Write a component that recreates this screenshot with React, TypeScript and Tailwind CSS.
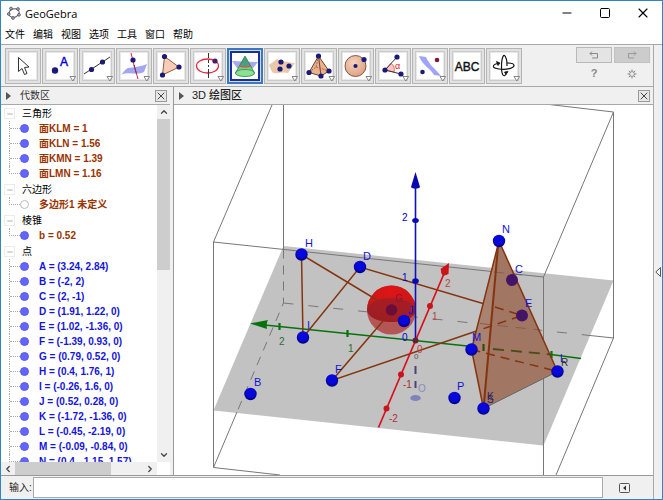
import type { ReactNode } from "react";
import {
  ChevronDown,
  ChevronLeft,
  ChevronRight,
  ChevronUp,
  Minus,
  Square,
  X,
} from "lucide-react";

const menus = ["文件", "编辑", "视图", "选项", "工具", "窗口", "帮助"];

const groups = [
  {
    name: "三角形",
    color: "text-[#993300]",
    items: ["面KLM = 1", "面KLN = 1.56", "面KMN = 1.39", "面LMN = 1.16"],
  },
  { name: "六边形", color: "text-[#993300]", hidden: true, items: ["多边形1 未定义"] },
  { name: "棱锥", color: "text-[#993300]", items: ["b = 0.52"] },
  {
    name: "点",
    color: "text-[#1414dc]",
    items: [
      "A = (3.24, 2.84)",
      "B = (-2, 2)",
      "C = (2, -1)",
      "D = (1.91, 1.22, 0)",
      "E = (1.02, -1.36, 0)",
      "F = (-1.39, 0.93, 0)",
      "G = (0.79, 0.52, 0)",
      "H = (0.4, 1.76, 1)",
      "I = (-0.26, 1.6, 0)",
      "J = (0.52, 0.28, 0)",
      "K = (-1.72, -1.36, 0)",
      "L = (-0.45, -2.19, 0)",
      "M = (-0.09, -0.84, 0)",
      "N = (0.4, -1.15, 1.57)",
    ],
  },
];

function Dot({ x, y, r = 2.6, fill = "#1a1a78" }: { x: number; y: number; r?: number; fill?: string }) {
  return <circle cx={x} cy={y} r={r} fill={fill} />;
}

const tools: { label: string; menu?: boolean; selected?: boolean; icon: ReactNode }[] = [
  {
    label: "移动",
    icon: (
      <path
        d="M13.5 9.5V23.5L17 20.5L19.5 26.5L22 25.5L19.5 19.5L24 19Z"
        fill="#fff"
        stroke="#333"
      />
    ),
  },
  {
    label: "点",
    menu: true,
    icon: (
      <>
        <Dot x={13} y={22.5} r={3.2} />
        <text x="18" y="17.5" fontSize="12" fill="#0000e0" stroke="#0000e0" strokeWidth="0.4">
          A
        </text>
      </>
    ),
  },
  {
    label: "直线",
    menu: true,
    icon: (
      <>
        <path d="M5 26L31 9" stroke="#333" />
        <Dot x={12.5} y={21.5} />
        <Dot x={23.5} y={14} />
      </>
    ),
  },
  {
    label: "垂线",
    menu: true,
    icon: (
      <>
        <path d="M5 27C7 25 9 21 12 20C18 19 24 19 31 16L28 24C21 28 13 23 5 27Z" fill="#a3a7f2" />
        <path d="M15 5L18 17L22 31" stroke="#e8203c" fill="none" />
        <path d="M18 17L20.5 26" stroke="#4a3060" strokeDasharray="2 1" />
        <Dot x={17} y={12} />
      </>
    ),
  },
  {
    label: "多边形",
    icon: (
      <>
        <path d="M11.5 8.5L26 19L9.5 27Z" fill="#f5cdb8" stroke="#9a5a3c" />
        <Dot x={11.5} y={8.5} />
        <Dot x={26} y={19} />
        <Dot x={9.5} y={27} />
      </>
    ),
  },
  {
    label: "圆",
    menu: true,
    icon: (
      <>
        <ellipse cx="17.5" cy="18" rx="11" ry="7" fill="none" stroke="#e42a40" strokeWidth="1.3" />
        <path d="M18.5 5V10M18.5 12V30" stroke="#333" />
        <path d="M18.5 15V17M18.5 19V21" stroke="#fff" />
        <Dot x={25} y={13} fill="#4a1a68" />
      </>
    ),
  },
  {
    label: "相交曲线",
    selected: true,
    icon: (
      <>
        <path d="M5 13L31 14L26 20L10 20Z" fill="#a4a9f0" />
        <path d="M18 8L28 25C28 30 8 30 8 25Z" fill="#69c878" fillOpacity="0.9" />
        <path d="M18 8L23 16.5C21 18.5 15 18.5 13 16.5Z" fill="#4d9d85" />
        <ellipse cx="18" cy="25" rx="9.5" ry="3.5" fill="#8ddf95" stroke="#268b39" strokeWidth="0.7" />
        <path d="M18 8L8.5 25M18 8L27.5 25" stroke="#278244" strokeWidth="0.7" />
        <path d="M12.5 17C14 19.5 22 19.5 23.5 17" stroke="#e33b4e" fill="none" strokeWidth="1.3" />
      </>
    ),
  },
  {
    label: "平面",
    menu: true,
    icon: (
      <>
        <path d="M5 17L13 11C20 14 24 14 31 15L24 25C18 23 11 27 8 24Z" fill="#ecc8ab" />
        <Dot x={17} y={14} />
        <Dot x={25} y={18} />
        <Dot x={16} y={21} />
      </>
    ),
  },
  {
    label: "棱锥",
    menu: true,
    icon: (
      <>
        <path d="M17.5 8L8 24.5L20 28L28 23Z" fill="#e8b28c" stroke="#704030" />
        <path d="M17.5 8L20 28" stroke="#704030" />
        <path d="M17.5 8L15 19L8 24.5M15 19L28 23" stroke="#a36a58" fill="none" strokeDasharray="2 1" />
        <Dot x={17.5} y={8} />
        <Dot x={8} y={24.5} />
        <Dot x={20} y={28} />
        <Dot x={28} y={23} />
      </>
    ),
  },
  {
    label: "球",
    menu: true,
    icon: (
      <>
        <circle cx="17.5" cy="18" r="10.5" fill="url(#ball)" stroke="#8a5340" />
        <Dot x={17.5} y={18} r={2.1} />
        <Dot x={26} y={11.5} />
      </>
    ),
  },
  {
    label: "角度",
    menu: true,
    icon: (
      <>
        <path d="M10 22L16 15.5C19 17 20 21 19 24Z" fill="#f9c7c7" stroke="#e84848" strokeWidth="0.8" />
        <path d="M22 9L10 22L26 26" stroke="#333" fill="none" />
        <text x="20" y="21" fontSize="9" fill="#e02020">
          α
        </text>
        <Dot x={22} y={9} />
        <Dot x={10} y={22} />
        <Dot x={26} y={26} />
      </>
    ),
  },
  {
    label: "反射",
    menu: true,
    icon: (
      <>
        <path d="M7 8L14 9C17 17 24 21 29 28L22 27C18 20 11 18 7 8Z" fill="#a0a4f8" />
        <Dot x={10.5} y={24} r={2.3} />
        <Dot x={25} y={12} r={2.3} fill="#7c1737" />
      </>
    ),
  },
  {
    label: "文本",
    icon: (
      <text x="18" y="22.5" fontSize="12" fill="#111" textAnchor="middle" stroke="#111" strokeWidth="0.4">
        ABC
      </text>
    ),
  },
  {
    label: "旋转视图",
    menu: true,
    icon: (
      <g fill="none" stroke="#111" strokeWidth="1.2">
        <path d="M13 15.5C6 16 5 20 13 21C21 22 28 20 28 17.5C28 15.5 24 15 21 15" />
        <path d="M20 26C18 30 15.5 27 15.5 19C15.5 9 18 4 20 10C21 12 21 15 21 18" />
        <path d="M10.5 13.5L14 15L12 17.5ZM22 23.5L20 26.5L18.5 24Z" fill="#111" strokeWidth="0.8" />
      </g>
    ),
  },
];

const points = [
  { name: "H", x: 301.5, y: 254.5 },
  { name: "D", x: 360, y: 267 },
  { name: "I", x: 303, y: 337.5 },
  { name: "F", x: 332, y: 380.5 },
  { name: "B", x: 250.5, y: 394 },
  { name: "J", x: 404, y: 321 },
  { name: "N", x: 499, y: 241 },
  { name: "M", x: 471.5, y: 349.5 },
  { name: "L", x: 557.5, y: 371.5 },
  { name: "K", x: 483.5, y: 408.5 },
  { name: "P", x: 454.5, y: 398 },
];

const pointLabels = [
  { name: "H", x: 305, y: 247 },
  { name: "D", x: 363, y: 260 },
  { name: "I", x: 307, y: 329 },
  { name: "F", x: 335, y: 373 },
  { name: "B", x: 254, y: 386 },
  { name: "J", x: 408, y: 314 },
  { name: "N", x: 502, y: 233 },
  { name: "C", x: 515, y: 273 },
  { name: "E", x: 525, y: 307 },
  { name: "M", x: 472, y: 341 },
  { name: "P", x: 457, y: 390 },
];

const ticks = [
  { text: "2", x: 402, y: 221, fill: "#0000c8" },
  { text: "1", x: 402, y: 281, fill: "#0000c8" },
  { text: "0", x: 402, y: 341, fill: "#0000c8" },
  { text: "2", x: 279, y: 345, fill: "#2c6b38" },
  { text: "1", x: 348, y: 352, fill: "#2c6b38" },
  { text: "2", x: 445, y: 287, fill: "#b84444" },
  { text: "1", x: 432, y: 320, fill: "#b84444" },
  { text: "0", x: 417, y: 353, fill: "#b84444" },
  { text: "-1", x: 403, y: 388, fill: "#b03030" },
  { text: "-2", x: 389, y: 422, fill: "#b03030" },
];

function Scene() {
  return (
    <svg
      viewBox="174 105 479 370"
      className="block h-full w-full"
      role="img"
      aria-label="3D 绘图区"
      fontFamily="'Liberation Sans', Arial, sans-serif"
    >
      <defs>
        <radialGradient id="blue-point" cx="0.5" cy="0.4" r="0.6">
          <stop offset="0.55" stopColor="#0808dc" />
          <stop offset="1" stopColor="#00007c" />
        </radialGradient>
        <radialGradient id="sphere" cx="0.5" cy="0.15" r="0.85">
          <stop offset="0" stopColor="#e01414" />
          <stop offset="0.6" stopColor="#c81818" />
          <stop offset="1" stopColor="#a81818" />
        </radialGradient>
      </defs>

      <path d="M283.5 246L613.5 280.5L543.5 445.5L213.5 410.5Z" fill="#c2c2c2" />

      {/* clipping box */}
      <g fill="none" stroke="#777">
        <path d="M272 105L213.5 242V467.5L280 475M283.5 105V249.5M213.5 242L543.5 277V475" />
        <path d="M545 104L613.5 112V338L556 475M613.5 112L543.5 277" />
        <path d="M213.5 467.5L237 412M590 335.5L613.5 338" />
        <path d="M283.5 249.5V303L237 412" strokeDasharray="9 7" />
        <path d="M283.5 303L590 335.5" strokeDasharray="10 15" />
      </g>

      {/* y axis */}
      <g stroke="#08720f" strokeWidth="1.6">
        <path d="M260 324.5L477 347" />
        <path d="M551 354.5L581 358.5" />
        <path d="M279.5 323V330M347.5 330V337" strokeWidth="2.2" />
      </g>
      <path d="M250 323.5L268 320C266.5 322 266.5 327 267 329Z" fill="#08720f" />

      {/* sphere */}
      <circle cx="391.5" cy="310" r="24.5" fill="#b45656" />
      <path d="M367 310A24.5 24.5 0 0 1 416 310C414 326 369 326 367 310Z" fill="url(#sphere)" />
      <path d="M367 310C371 294 412 294 416 310C414 326 369 326 367 310Z" fill="#962028" fillOpacity="0.75" />
      <circle cx="391.5" cy="310" r="5.8" fill="#6b0d3a" />
      <text x="395" y="302" fontSize="10" fill="#8c1440">
        G
      </text>

      {/* hexagon */}
      <g fill="none" stroke="#84340e" strokeWidth="1.5">
        <path d="M303 337.5L301.5 254.5L377 300M303 337.5L360 267L488 305" />
        <path d="M383 321L332 380.5L478 330.5" />
      </g>

      {/* pyramid with what shows through it */}
      <path d="M499 241L471.5 349.5L483.5 408.5L557.5 371.5Z" fill="#a17663" />
      <path d="M499 241L471.5 349.5L483.5 408.5Z" fill="#aa8270" />
      <path d="M494 272L522 275M480 323.5L540 330" stroke="#806055" strokeDasharray="10 8" />
      <path d="M493 349L551 354.5" stroke="#4a4c18" strokeWidth="1.8" strokeDasharray="11 7" />
      <path d="M483.5 344V351" stroke="#344b16" strokeWidth="2.2" />
      <path d="M551.5 351V358" stroke="#08720f" strokeWidth="2.2" />
      <g fill="none" stroke="#84340e" strokeWidth="1.5">
        <path d="M495 307L522 315.5L478 330.5M471.5 349.5L557.5 371.5" strokeDasharray="9 6" />
        <path d="M483.5 408.5L471.5 349.5L499 241L557.5 371.5" />
        <path d="M498.5 241L483.5 408.5" strokeWidth="2" />
      </g>
      <path d="M483.5 408.5L557.5 371.5" stroke="#666" />
      <circle cx="512" cy="280" r="6" fill="#441466" />
      <circle cx="522" cy="315.5" r="6" fill="#441466" />

      {/* z axis */}
      <path d="M415.5 186V340" stroke="#1010b8" strokeWidth="1.6" />
      <path d="M415.5 172L411 187C412 189 419 189 420 187Z" fill="#0808b0" />
      <ellipse cx="415.5" cy="220.5" rx="3.3" ry="2.5" fill="#0808b8" />
      <ellipse cx="415.5" cy="281" rx="3.3" ry="2.8" fill="#0808b8" />
      <path d="M415.5 366V374M415.5 381V388" stroke="#454578" strokeWidth="2" />
      <ellipse cx="415.5" cy="398" rx="5.3" ry="3" fill="#7f82bc" />
      <text x="418" y="392" fontSize="10" fill="#8b8bc0">
        O
      </text>

      {/* x axis */}
      <path d="M378.5 427.5L446 269" stroke="#d8101c" strokeWidth="1.7" />
      <path d="M449 263L448.5 274L443 276L440.5 269Z" fill="#cf1014" />
      <g fill="#c9141c">
        <circle cx="444.5" cy="271.5" r="3.5" />
        <circle cx="430" cy="306" r="3" />
        <circle cx="401" cy="374.5" r="3" />
        <circle cx="386.5" cy="408.5" r="3" />
      </g>
      <circle cx="415.5" cy="340.5" r="3" fill="#652038" />

      {points.map((point) => (
        <circle key={point.name} cx={point.x} cy={point.y} r="6.2" fill="url(#blue-point)" />
      ))}
      {pointLabels.map((label) => (
        <text key={label.name} x={label.x} y={label.y} fontSize="11" fill="#1414d8">
          {label.name}
        </text>
      ))}
      <g fontSize="10">
        {ticks.map((tick) => (
          <text key={`${tick.x}-${tick.y}`} x={tick.x} y={tick.y} fill={tick.fill}>
            {tick.text}
          </text>
        ))}
      </g>

      {/* face and vertex labels that land on each other */}
      <g fontSize="10">
        <text x="487" y="400" fill="#30205c">K</text>
        <text x="487" y="403" fill="#30205c">S</text>
        <text x="560" y="362" fill="#1414d8">L</text>
        <text x="561" y="366" fill="#303030">R</text>
        <text x="414" y="359" fill="#555560" fontSize="8">0</text>
      </g>
    </svg>
  );
}

function CloseButton() {
  return (
    <button
      aria-label="关闭"
      className="flex h-3 w-3 items-center justify-center border border-[#999] bg-[#e8e8e8] text-[#444]"
    >
      <X className="h-3 w-3 shrink-0" strokeWidth={2} />
    </button>
  );
}

function PanelHeader({ title, bold }: { title: string; bold?: boolean }) {
  return (
    <header className="flex h-[18px] shrink-0 items-center border-b border-[#a8a8a8] bg-[#f0f0f0] pr-[3px] pl-[5px] text-[11px]">
      <svg viewBox="0 0 5 8" className="h-2 w-[5px]" fill="#555">
        <path d="M0 0L5 4L0 8Z" />
      </svg>
      <h2 className={bold ? "ml-2 grow font-medium text-[#222]" : "ml-[9px] grow text-[10px] text-[#333]"}>
        {title}
      </h2>
      <CloseButton />
    </header>
  );
}

function AlgebraTree() {
  return (
    <div className="min-w-0 grow overflow-hidden pt-px">
      <ul className="flex flex-col gap-px">
        {groups.map((group) => (
          <li key={group.name}>
            <div className="flex h-[15px] items-center gap-[7px] pl-[3px]">
              <button
                aria-label={`折叠${group.name}`}
                className="flex h-[11px] w-[11px] items-center justify-center border border-[#ececec] text-[#888]"
              >
                <Minus className="h-2 w-2" />
              </button>
              <span>{group.name}</span>
            </div>
            <ul>
              {group.items.map((item, index) => (
                <li key={item} className="flex h-[15px] items-center whitespace-nowrap pl-2">
                  <span
                    className={
                      index === group.items.length - 1
                        ? "h-2 w-[11px] self-start border-b border-l border-dotted border-[#aaa]"
                        : "flex h-[15px] w-[11px] items-center border-l border-dotted border-[#aaa]"
                    }
                  >
                    {index < group.items.length - 1 && (
                      <span className="w-full border-t border-dotted border-[#aaa]" />
                    )}
                  </span>
                  <button
                    aria-label={`显示或隐藏 ${item}`}
                    className={
                      group.hidden
                        ? "h-[9px] w-[9px] rounded-full border border-[#bbb] bg-white"
                        : "h-[9px] w-[9px] rounded-full border border-[#5c5ce8] bg-[#6464ff]"
                    }
                  />
                  <span className={`ml-[10px] font-bold ${group.color}`}>{item}</span>
                </li>
              ))}
            </ul>
          </li>
        ))}
      </ul>
    </div>
  );
}

export default function App() {
  return (
    <div className="flex h-screen flex-col overflow-hidden border border-[#3484c4] bg-[#f0f0f0] font-['Liberation_Sans','Noto_Sans_CJK_SC',sans-serif] text-[10px] leading-[15px] text-black">
      <header className="flex h-6 shrink-0 items-center bg-white pl-[6px]">
        <svg viewBox="0 0 14 14" className="h-[14px] w-[14px]" fill="none" stroke="#555">
          <ellipse cx="7" cy="7" rx="5.3" ry="4.2" transform="rotate(-20 7 7)" />
          <g fill="#aaaad0" stroke="#444" strokeWidth="0.7">
            <circle cx="4" cy="2.5" r="1.4" />
            <circle cx="11" cy="3" r="1.4" />
            <circle cx="1.8" cy="8" r="1.4" />
            <circle cx="6" cy="12" r="1.4" />
            <circle cx="12" cy="8.8" r="1.4" />
          </g>
        </svg>
        <h1 className="ml-1 grow font-['Open_Sans',sans-serif] text-[11px]">GeoGebra</h1>
        <div className="flex items-center">
          <button aria-label="最小化" className="flex w-[38px] justify-center">
            <Minus className="h-[14px] w-[14px]" strokeWidth={1.7} />
          </button>
          <button aria-label="最大化" className="flex w-[38px] justify-center">
            <Square className="h-3 w-3" strokeWidth={2} />
          </button>
          <button aria-label="关闭窗口" className="flex w-[38px] justify-center">
            <X className="h-4 w-4" strokeWidth={1.7} />
          </button>
        </div>
      </header>

      <nav className="flex h-5 shrink-0 items-center gap-2 border-b border-[#a8a8a8] bg-white pl-1">
        {menus.map((menu) => (
          <button key={menu}>{menu}</button>
        ))}
      </nav>

      <div className="flex min-h-0 grow">
        <main className="flex min-w-0 grow flex-col">
          <div className="flex h-[42px] shrink-0 items-center gap-px border-b border-[#a8a8a8] pr-[3px] pl-1">
            {tools.map((tool) => (
              <button
                key={tool.label}
                aria-label={tool.label}
                className={
                  tool.selected
                    ? "h-9 w-9 shrink-0 border-2 border-[#3b78bc] bg-[#c8dcf0] p-px"
                    : "h-9 w-9 shrink-0 border border-[#b4b4b4] bg-[#e2e2e2]"
                }
              >
                <svg
                  viewBox={tool.selected ? "3 3 30 30" : "1 1 34 34"}
                  className="block h-full w-full"
                  fontFamily="'Liberation Sans', Arial, sans-serif"
                >
                  <defs>
                    <radialGradient id="ball" cx="0.4" cy="0.35" r="0.7">
                      <stop offset="0" stopColor="#f7d2bd" />
                      <stop offset="1" stopColor="#dba083" />
                    </radialGradient>
                  </defs>
                  {tool.selected ? (
                    <rect x="4" y="4" width="28" height="28" fill="#fff" stroke="#1b2e9c" strokeWidth="2" />
                  ) : (
                    <>
                      <rect x="3.5" y="3.5" width="29" height="29" fill="#e8e8e8" stroke="#cacaca" />
                      <rect x="5" y="5" width="26" height="26" fill="#fff" />
                    </>
                  )}
                  {tool.icon}
                  {tool.menu && (
                    <path d="M28 28.5H33.5L30.8 33Z" fill="#fff" stroke="#777" strokeWidth="0.9" />
                  )}
                </svg>
              </button>
            ))}
            <div className="ml-auto grid grid-cols-2 gap-x-[2px] gap-y-[3px] self-start pt-[2px] text-[#888]">
              <button aria-label="撤销" className="flex h-4 w-9 items-center justify-center border border-[#b8b8b8] bg-[#e4e4e4]">
                <svg viewBox="0 0 10 8" className="h-2 w-[10px]" fill="none" stroke="currentColor">
                  <path d="M3 0.5L1 2.5L3 4.5M1 2.5H8.5V7H3" />
                </svg>
              </button>
              <button aria-label="重做" className="flex h-4 w-9 items-center justify-center border border-[#c0c0c0] bg-[#cccccc]">
                <svg viewBox="0 0 10 8" className="h-2 w-[10px]" fill="none" stroke="#999">
                  <path d="M7 0.5L9 2.5L7 4.5M9 2.5H1.5V7H7" />
                </svg>
              </button>
              <button aria-label="帮助" className="text-[11px] font-bold">
                ?
              </button>
              <button aria-label="设置" className="flex items-center justify-center">
                <svg viewBox="0 0 10 10" className="h-[10px] w-[10px]" fill="none" stroke="currentColor">
                  <circle cx="5" cy="5" r="2.4" />
                  <path d="M5 0.5V2M5 8V9.5M0.5 5H2M8 5H9.5M1.8 1.8L3 3M7 7L8.2 8.2M8.2 1.8L7 3M3 7L1.8 8.2" />
                </svg>
              </button>
            </div>
          </div>

          <div className="flex min-h-0 grow">
            <section className="flex w-[169px] shrink-0 flex-col bg-white">
              <PanelHeader title="代数区" />
              <div className="flex min-h-0 grow">
                <AlgebraTree />
                <div className="flex w-[13px] shrink-0 flex-col bg-[#f0f0f0] text-[#444]">
                  <button aria-label="向上滚动" className="flex h-[14px] items-center justify-center">
                    <ChevronUp className="h-[10px] w-[10px]" strokeWidth={3} />
                  </button>
                  <div className="flex grow flex-col">
                    <div className="h-[46%] bg-[#cdcdcd]" />
                  </div>
                  <button aria-label="向下滚动" className="flex h-[14px] items-center justify-center">
                    <ChevronDown className="h-[10px] w-[10px]" strokeWidth={3} />
                  </button>
                </div>
              </div>
              <div className="mr-[13px] flex h-[13px] shrink-0 bg-[#f0f0f0] text-[#444]">
                <button aria-label="向左滚动" className="flex w-[14px] items-center justify-center">
                  <ChevronLeft className="h-[10px] w-[10px]" strokeWidth={3} />
                </button>
                <div className="flex grow">
                  <div className="w-3/4 bg-[#cdcdcd]" />
                </div>
                <button aria-label="向右滚动" className="flex w-[14px] items-center justify-center">
                  <ChevronRight className="h-[10px] w-[10px]" strokeWidth={3} />
                </button>
              </div>
            </section>
            <div className="w-1 shrink-0 border-r border-[#999]" />
            <section className="flex min-w-0 grow flex-col bg-white">
              <PanelHeader title="3D 绘图区" bold />
              <div className="min-h-0 grow overflow-hidden">
                <Scene />
              </div>
            </section>
          </div>

          <form className="flex h-6 shrink-0 items-center border-t border-[#999]">
            <label htmlFor="command" className="w-8 pl-2 whitespace-nowrap text-[#222]">
              输入:
            </label>
            <input
              id="command"
              className="h-[21px] min-w-0 grow border border-[#aaa] bg-white px-1 outline-none"
            />
            <button type="button" aria-label="命令帮助" className="flex w-[50px] justify-center pr-2">
              <svg viewBox="0 0 11 10" className="h-[10px] w-[11px]" fill="none" stroke="#555">
                <rect x="0.5" y="0.5" width="10" height="9" rx="1" />
                <path d="M7 2.5L4 5L7 7.5Z" fill="#333" stroke="none" />
              </svg>
            </button>
          </form>
        </main>
        <aside className="flex w-[9px] shrink-0 items-center border-l border-[#a8a8a8]">
          <button aria-label="展开格局" className="flex w-full justify-center">
            <svg viewBox="0 0 6 10" className="h-[10px] w-[6px]" fill="#fff" stroke="#555">
              <path d="M5.5 0.5V9.5L0.8 5Z" />
            </svg>
          </button>
        </aside>
      </div>
    </div>
  );
}
